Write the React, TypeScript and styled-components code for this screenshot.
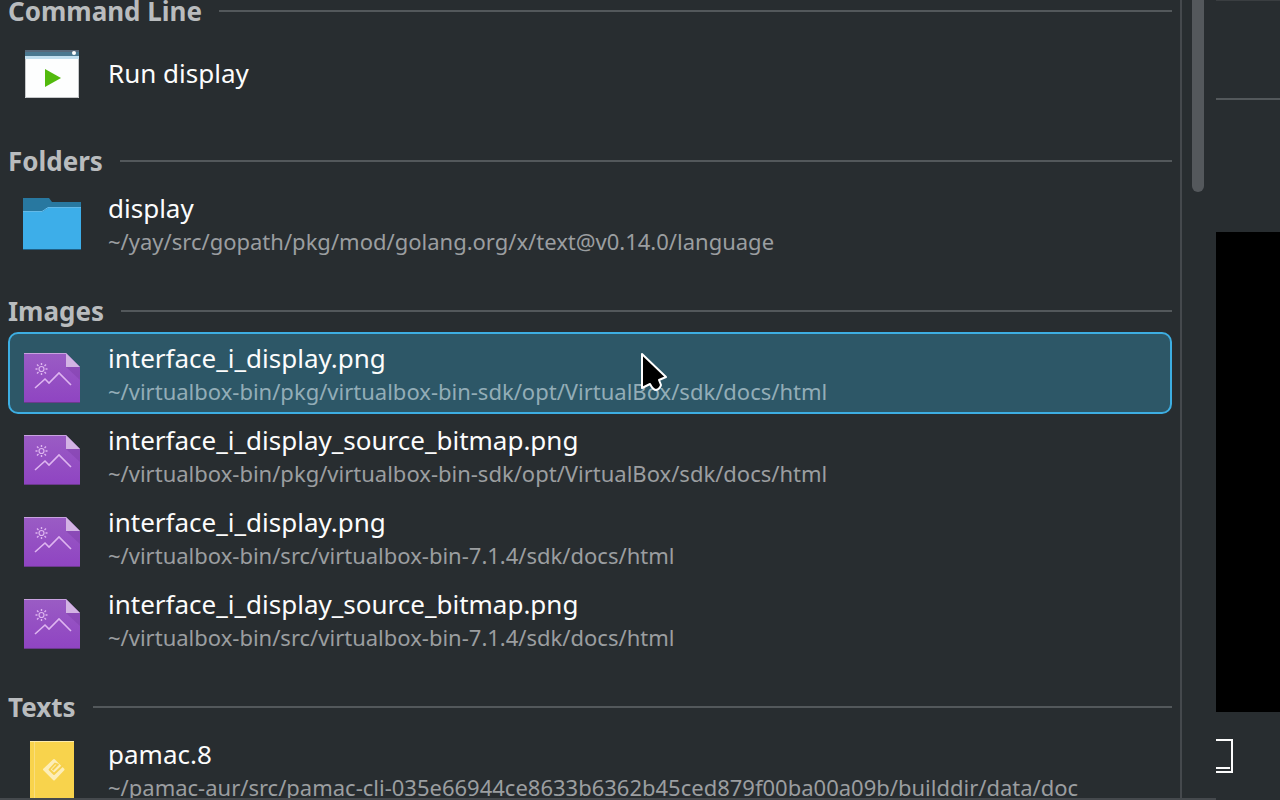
import React from "react";
import styled, { createGlobalStyle } from "styled-components";

const colors = {
  window: "#282d30",
  separator: "#53585b",
  border: "#45494d",
  thumb: "#54585c",
  heading: "#b9bcbe",
  title: "#fcfcfc",
  subtitle: "#9b9ea0",
  selection: "#2d5767",
  selectionBorder: "#3daee2",
};

const GlobalStyle = createGlobalStyle`
  * { box-sizing: border-box; }
  html, body { margin: 0; height: 100%; }
  body {
    overflow: hidden;
    background: ${colors.window};
    font-family: "Noto Sans", sans-serif;
  }
`;

const Window = styled.div`
  display: flex;
  height: 100vh;
  overflow: hidden;
`;

const Popup = styled.div`
  flex: 1;
  min-width: 0;
  display: flex;
  border-bottom: 2px solid ${colors.border};
`;

const Results = styled.main`
  flex: 1;
  min-width: 0;
  padding: 0 8px;
  overflow: hidden;
  border-right: 2px solid ${colors.border};
`;

const ScrolledList = styled.div`
  display: flex;
  flex-direction: column;
  gap: 24px;
  margin-top: -12px;
`;

const Heading = styled.h2`
  display: flex;
  align-items: center;
  gap: 17px;
  height: 44px;
  margin: 0;
  padding-top: 2px;
  font-size: 26px;
  line-height: 36px;
  font-weight: 700;
  color: ${colors.heading};

  &::after {
    content: "";
    flex: 1;
    height: 2px;
    background: ${colors.separator};
  }
`;

const Items = styled.ul`
  margin: 0;
  padding: 0;
  list-style: none;
`;

const Item = styled.button<{ $selected?: boolean }>`
  display: flex;
  align-items: center;
  gap: 24px;
  width: 100%;
  height: 82px;
  padding: 0 10px;
  font-family: inherit;
  text-align: left;
  border: 2px solid ${(p) => (p.$selected ? colors.selectionBorder : "transparent")};
  border-radius: 10px;
  background: ${(p) => (p.$selected ? colors.selection : "transparent")};

  svg { flex: none; }
`;

const Labels = styled.span`
  display: flex;
  flex-direction: column;
  min-width: 0;
  white-space: nowrap;
`;

const Title = styled.span`
  font-size: 26px;
  line-height: 36px;
  color: ${colors.title};
`;

const Subtitle = styled.span<{ $selected?: boolean }>`
  font-size: 22px;
  line-height: 30px;
  color: ${(p) => (p.$selected ? "#93adb7" : colors.subtitle)};
`;

const ScrollTrack = styled.div`
  width: 34px;
  padding-left: 10px;
`;

const ScrollThumb = styled.div`
  width: 12px;
  height: 24%;
  border-radius: 0 0 6px 6px;
  background: ${colors.thumb};
`;

const SidePane = styled.aside`
  display: flex;
  flex-direction: column;
  width: 64px;
  border-top: 1px solid #3a3e41;
`;

const SideHeader = styled.div`
  height: 99px;
  border-bottom: 2px solid ${colors.separator};
`;

const Screen = styled.div`
  height: 480px;
  margin: 132px 0 27px;
  background: #000;
`;

const Pointer = styled.svg`
  position: absolute;
  left: 640px;
  top: 352px;
  pointer-events: none;
`;

function RunIcon() {
  return (
    <svg width="64" height="64" viewBox="0 0 64 64" aria-hidden="true">
      <rect x="5" y="9" width="54" height="48" fill="#fdfefe" />
      <rect x="5" y="9" width="54" height="6" fill="#4a7890" />
      <rect x="5" y="9" width="54" height="2" fill="#56687a" />
      <rect x="5" y="15" width="54" height="3" fill="#c1dfef" />
      <circle cx="54" cy="12" r="2" fill="#fff" />
      <path d="M5.500 18V56.500H58.500V18" fill="none" stroke="#c6c8ca" />
      <path d="M25 28L41 37L25 46Z" fill="#52ba0d" />
    </svg>
  );
}

function FolderIcon() {
  return (
    <svg width="64" height="64" viewBox="0 0 64 64" aria-hidden="true">
      <path d="M3 7H29L32 11H61V22H3Z" fill="#2878a0" />
      <path d="M3 21H22L28 17H61V59H3Z" fill="#3daee9" />
      <path d="M3 20.500H22L28 16.500H61" fill="none" stroke="#62b9e8" />
      <rect x="3" y="58" width="58" height="1" fill="#1f5f85" />
    </svg>
  );
}

function ImageIcon() {
  return (
    <svg width="64" height="64" viewBox="0 0 64 64" aria-hidden="true">
      <defs>
        <linearGradient id="purple" x1="0" y1="0" x2="0" y2="1">
          <stop offset="0" stopColor="#9a5cc4" />
          <stop offset="1" stopColor="#8f44c2" />
        </linearGradient>
      </defs>
      <path d="M4 12H46L60 26V62H4Z" fill="url(#purple)" />
      <path d="M46 26H60V39Z" fill="#7b3da6" opacity=".4" />
      <path d="M4 12.500H46" stroke="#c9a2e0" />
      <path d="M46 12L60 26H46Z" fill="#d3b3e4" />
      <path d="M15 47L25 38L29 42L39 32L51 44" fill="none" stroke="#deb5f0" strokeWidth="1.600" />
      <circle cx="21.500" cy="28" r="2.500" fill="none" stroke="#deb5f0" strokeWidth="1.200" />
      <path
        d="M21.500 22V24M21.500 32V34M15.500 28H17.500M25.500 28H27.500M17 23.500L18.500 25M24.500 31L26 32.500M26 23.500L24.500 25M18.500 31L17 32.500"
        stroke="#deb5f0"
        strokeWidth="1.400"
      />
      <rect x="4" y="61" width="56" height="1" fill="#6c3a8e" />
    </svg>
  );
}

function BookIcon() {
  return (
    <svg width="64" height="64" viewBox="0 0 64 64" aria-hidden="true">
      <rect x="10" y="4" width="44" height="60" fill="#f8d34c" />
      <rect x="10" y="4" width="44" height="1" fill="#fdebab" />
      <rect x="14" y="5" width="1" height="59" fill="#f9de7d" />
      <path
        d="M34 23L43.500 32.500L34 42.500L24 32.500Z"
        fill="#fdeeb8"
        stroke="#fdeeb8"
        strokeWidth="2"
        strokeLinejoin="round"
      />
      <path
        d="M32.500 33L38 27.500L35 26.500L29.500 32.500L34 37L44.500 27"
        fill="none"
        stroke="#f6d04d"
        strokeWidth="1.800"
        strokeLinejoin="round"
      />
    </svg>
  );
}

function ScreenCornerIcon() {
  return (
    <svg width="18" height="34" viewBox="0 0 18 34" aria-hidden="true">
      <path d="M0 1H16V33H0M0 29H14" fill="none" stroke="#fcfcfc" strokeWidth="2" />
    </svg>
  );
}

interface Result {
  title: string;
  path?: string;
  selected?: boolean;
}

interface Group {
  name: string;
  Icon: () => React.JSX.Element;
  results: Result[];
}

const groups: Group[] = [
  { name: "Command Line", Icon: RunIcon, results: [{ title: "Run display" }] },
  {
    name: "Folders",
    Icon: FolderIcon,
    results: [{ title: "display", path: "~/yay/src/gopath/pkg/mod/golang.org/x/text@v0.14.0/language" }],
  },
  {
    name: "Images",
    Icon: ImageIcon,
    results: [
      {
        title: "interface_i_display.png",
        path: "~/virtualbox-bin/pkg/virtualbox-bin-sdk/opt/VirtualBox/sdk/docs/html",
        selected: true,
      },
      {
        title: "interface_i_display_source_bitmap.png",
        path: "~/virtualbox-bin/pkg/virtualbox-bin-sdk/opt/VirtualBox/sdk/docs/html",
      },
      { title: "interface_i_display.png", path: "~/virtualbox-bin/src/virtualbox-bin-7.1.4/sdk/docs/html" },
      {
        title: "interface_i_display_source_bitmap.png",
        path: "~/virtualbox-bin/src/virtualbox-bin-7.1.4/sdk/docs/html",
      },
    ],
  },
  {
    name: "Texts",
    Icon: BookIcon,
    results: [
      {
        title: "pamac.8",
        path: "~/pamac-aur/src/pamac-cli-035e66944ce8633b6362b45ced879f00ba00a09b/builddir/data/doc",
      },
    ],
  },
];

export default function App() {
  return (
    <>
      <GlobalStyle />
      <Window>
        <Popup>
          <Results>
            <ScrolledList>
              {groups.map(({ name, Icon, results }) => (
                <section key={name}>
                  <Heading>{name}</Heading>
                  <Items>
                    {results.map((r, i) => (
                      <li key={i}>
                        <Item type="button" $selected={r.selected}>
                          <Icon />
                          <Labels>
                            <Title>{r.title}</Title>
                            {r.path && <Subtitle $selected={r.selected}>{r.path}</Subtitle>}
                          </Labels>
                        </Item>
                      </li>
                    ))}
                  </Items>
                </section>
              ))}
            </ScrolledList>
          </Results>
          <ScrollTrack>
            <ScrollThumb />
          </ScrollTrack>
        </Popup>
        <SidePane>
          <SideHeader />
          <Screen />
          <ScreenCornerIcon />
        </SidePane>
      </Window>
      <Pointer width="30" height="42" viewBox="0 0 30 42" aria-hidden="true">
        <path
          d="M2 2L26 25L19 28L21 33Q20 37 16 38Q13 38 10 32L2 36Z"
          fill="#000"
          stroke="#fff"
          strokeWidth="2"
          strokeLinejoin="round"
        />
      </Pointer>
    </>
  );
}
